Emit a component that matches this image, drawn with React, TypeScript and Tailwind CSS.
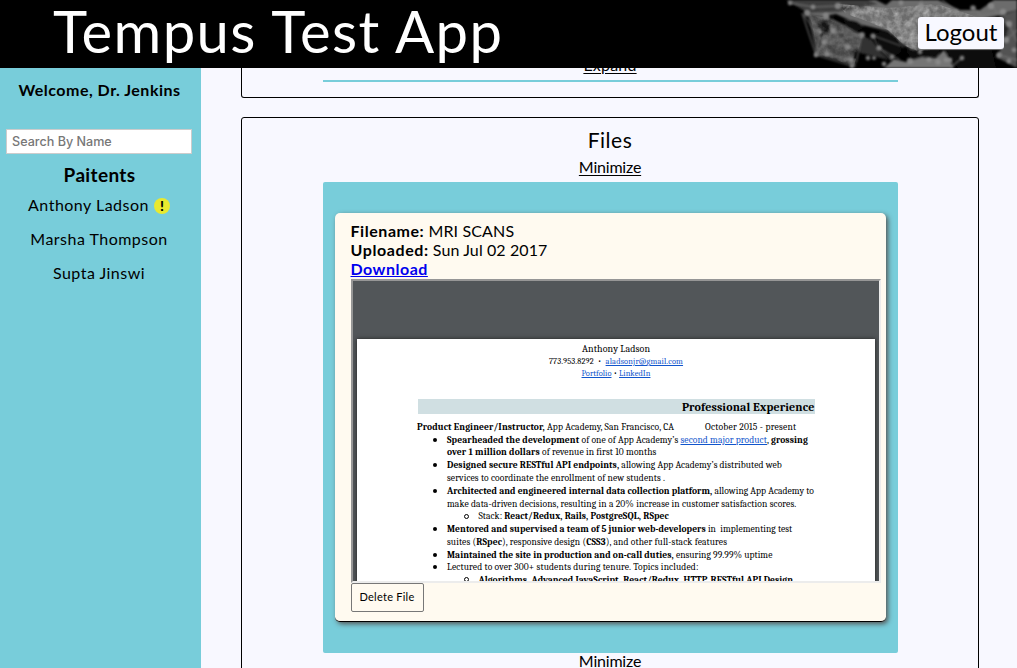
import type { ReactNode } from "react";

function Network() {
  const dots: [number, number, number][] = [
    [10, 3, 3], [27, 13, 4], [33, 7, 3], [46, 16, 4], [58, 6, 4], [40, 32, 3], [53, 31, 3.4], [44, 42, 3.2], [36, 55, 3], [47, 54, 3], [68, 47, 3.4],
    [82, 35, 3.6], [93, 36, 3.4], [99, 48, 3.4], [71, 60, 3], [88, 58, 3], [94, 58, 2.6], [72, 66, 3], [104, 64, 3], [112, 57, 3], [130, 61, 4],
    [140, 52, 3], [149, 60, 3], [158, 62, 3.4], [166, 60, 3], [121, 3, 3], [141, 6, 4], [149, 30, 3], [176, 12, 3], [193, 8, 3.5], [211, 6, 4],
    [223, 12, 4], [229, 24, 4], [226, 40, 4], [219, 55, 3.5], [229, 61, 3], [234, 50, 3], [170, 60, 3], [182, 58, 3],
  ];
  return (
    <svg className="absolute inset-y-0 right-0 h-[68px] w-[237px]" viewBox="0 0 237 68" aria-hidden="true">
      <defs>
        <filter id="grain" x="0" y="0" width="100%" height="100%">
          <feTurbulence type="fractalNoise" baseFrequency="0.14" numOctaves="3" seed="5" />
          <feColorMatrix values="0 0 0 0 0.5  0 0 0 0 0.5  0 0 0 0 0.5  1.6 0 0 0 -0.5" />
          <feComposite in2="SourceGraphic" operator="in" />
        </filter>
        <filter id="soft">
          <feGaussianBlur stdDeviation="1.3" />
        </filter>
        <filter id="slight">
          <feGaussianBlur stdDeviation="0.8" />
        </filter>
      </defs>
      <g filter="url(#soft)">
        <path d="M14 0 28 14 36 18 56 14 78 24 108 31 122 44 136 52 152 48 168 40 180 36 200 20 222 14 237 10V0H214L200 10 180 10 158 0H112L106 5 96 0Z" fill="#6c6c6c" />
        <path d="M6 0 28 13 58 12 98 4 88 0Z" fill="#3c3c3c" />
        <path d="M28 14 36 54 60 61 76 67 73 52 82 37 66 26 48 17Z" fill="#444" />
        <path d="M36 22 54 17 48 32 40 38Z" fill="#191919" />
        <path d="M64 20Q76 18 84 27L77 31 66 27Z" fill="#111" />
        <path d="M96 33Q112 28 120 42L121 52 112 58 99 47Z" fill="#0b0b0b" />
        <path d="M83 36 92 40 100 51 109 60 80 53 76 46Z" fill="#303030" />
        <path d="M104 68 114 59 126 62 142 57 156 58 164 50 170 60 174 68Z" fill="#747474" />
        <path d="M126 50 160 48 158 56 144 56 132 60Z" fill="#101010" />
        <path d="M166 50 212 50 216 68H178L168 58Z" fill="#0c0c0c" />
        <path d="M222 15 237 10V68L216 57 224 44Z" fill="#525252" />
        <path d="M222 14 212 22 216 50 224 44 229 26Z" fill="#262626" />
      </g>
      <path d="M58 4 66 14 84 20 108 30 124 45 138 52 180 38 200 18 157 4 108 8Z" filter="url(#grain)" fill="#fff" />
      <path d="M30 15 38 54 74 66 82 37 66 27 48 18Z" filter="url(#grain)" fill="#fff" opacity=".4" />
      <g stroke="#777" strokeWidth="1.3" opacity=".75" fill="none" filter="url(#slight)">
        <path d="M10 3 33 7 58 6M27 13 40 32 36 55 47 54 71 60M22 13 36 55 53 31 82 35M46 16 53 31 68 47 44 42M46 17 82 35 71 60M36 55 72 66M36 55 44 42 82 35M24 15 41 40M93 36 99 48 112 60M99 48 120 60M82 35 76 63M94 36 124 47M142 0 128 37M146 3 166 20M162 0 184 18 223 12M193 8 204 18M211 6 229 24 237 42M219 55 237 60M226 40 237 30M182 58 170 68M223 12 202 22M229 24 214 18" />
        <path d="M62 4 104 22 142 6M78 15 119 27 149 30 180 20M84 4 123 37 141 29 176 12" opacity=".6" />
      </g>
      <g fill="#8c8c8c" opacity=".85" filter="url(#slight)">
        {dots.map(([x, y, r]) => (
          <circle key={`${x}-${y}`} cx={x} cy={y} r={r * 0.8} />
        ))}
      </g>
    </svg>
  );
}

function Line({ children, h, className = "" }: { children: ReactNode; h: string; className?: string }) {
  return <p className={`flex items-center whitespace-pre ${h} ${className}`}>{children}</p>;
}

function Bullet({ children, h, className = "" }: { children: ReactNode; h: string; className?: string }) {
  return (
    <div className={`flex items-center whitespace-pre pl-[15px] ${h}`}>
      <span className="mr-[10.5px] size-1 shrink-0 rounded-full bg-black" />
      <span className={className}>{children}</span>
    </div>
  );
}

function SubBullet({ children, h, className = "" }: { children: ReactNode; h: string; className?: string }) {
  return (
    <div className={`flex items-center whitespace-pre pl-[46px] ${h}`}>
      <span className="mr-[10px] size-[5px] shrink-0 rounded-full border border-black" />
      <span className={className}>{children}</span>
    </div>
  );
}

function Resume() {
  return (
    <div className="h-[304px] w-[530px] overflow-hidden border-2 border-t-[#969696] border-r-[#ececec] border-b-[#ececec] border-l-[#969696] bg-[#525659] px-1 pt-[58px]">
      <div className="h-[260px] bg-white pt-[3px] font-[Cambria,Caladea,'Liberation_Serif',serif] text-[9.56px] leading-none text-black shadow-[0_0_4px_#222]">
        <div className="flex flex-col items-center whitespace-pre pl-px">
          <Line h="h-[13px]" className="text-[10px] tracking-[0.08px]">Anthony Ladson</Line>
          <Line h="h-[13px]" className="text-[8.4px] tracking-[0.15px]">
            773.953.8292  •  <a className="text-[#1155cc] underline">aladsonjr@gmail.com</a>
          </Line>
          <Line h="h-[11px]" className="text-[8.4px] tracking-[0.05px]">
            <a className="text-[#1155cc] underline">Portfolio</a> • <a className="text-[#1155cc] underline">LinkedIn</a>
          </Line>
        </div>
        <div className="ml-[61px] mt-5 flex h-[15px] w-[397px] items-center justify-end bg-[#d0dfe2] text-[12px] font-bold tracking-[0.13px]">
          Professional Experience
        </div>
        <div className="ml-[61px] mt-[6px]">
          <Line h="h-[13px]" className="-ml-[0.5px] tracking-[0.1px]">
            <b>Product Engineer/Instructor,</b> App Academy, San Francisco, CA<span className="ml-[31px] tracking-[0.22px]">October 2015 - present</span>
          </Line>
          <Bullet h="h-[13px]" className="tracking-[0.09px]">
            <b>Spearheaded the development</b> of one of App Academy’s <a className="text-[#1155cc] underline">second major product</a>, <b>grossing</b>
          </Bullet>
          <Line h="h-[12px]" className="pl-[29.5px] tracking-[0.1px]"><b>over 1 million dollars</b> of revenue in first 10 months</Line>
          <Bullet h="h-[13px]" className="tracking-[0.06px]"><b>Designed secure RESTful API endpoints,</b> allowing App Academy’s distributed web</Bullet>
          <Line h="h-[13px]" className="pl-[29.5px] tracking-[0.11px]">services to coordinate the enrollment of new students .</Line>
          <Bullet h="h-[13px]" className="tracking-[0.04px]"><b>Architected and engineered internal data collection platform,</b> allowing App Academy to</Bullet>
          <Line h="h-[13px]" className="pl-[29.5px] tracking-[0.11px]">make data-driven decisions, resulting in a 20% increase in customer satisfaction scores.</Line>
          <SubBullet h="h-[12px]" className="tracking-[0.04px]">Stack: <b>React/Redux, Rails, PostgreSQL, RSpec</b></SubBullet>
          <Bullet h="h-[13px]" className="tracking-[0.05px]"><b>Mentored and supervised a team of 5 junior web-developers</b> in  implementing test</Bullet>
          <Line h="h-[13px]" className="pl-[29.5px] tracking-[0.11px]">suites (<b>RSpec</b>), responsive design (<b>CSS3</b>), and other full-stack features</Line>
          <Bullet h="h-[13px]" className="tracking-[0.05px]"><b>Maintained the site in production and on-call duties,</b> ensuring 99.99% uptime</Bullet>
          <Bullet h="h-[12px]" className="tracking-[0.14px]">Lectured to over 300+ students during tenure. Topics included:</Bullet>
          <SubBullet h="h-[13px]" className="tracking-[0.04px]"><b>Algorithms, Advanced JavaScript, React/Redux, HTTP, RESTful API Design</b></SubBullet>
        </div>
      </div>
    </div>
  );
}

export default function App() {
  return (
    <div className="flex h-[668px] w-[1017px] flex-col overflow-hidden bg-[#f8f8ff] font-[Lato,sans-serif] text-base text-black">
      <header className="relative flex h-[68px] shrink-0 items-center justify-between bg-black pl-[53px] pr-[13px]">
        <Network />
        <h1 className="-mt-[7px] whitespace-nowrap text-[58px] leading-[64px] tracking-[1.4px] text-white">Tempus Test App</h1>
        <button className="relative mt-[-2px] h-8 w-[86px] rounded-[3px] bg-[#f8f8ff] pb-[2px] text-center text-[24px] leading-[30px] shadow-[0_1px_1px_#777]">Logout</button>
      </header>

      <div className="flex min-h-0 grow">
        <aside className="flex w-[201px] shrink-0 flex-col items-center bg-[#78cdda] pr-[3px] pt-[12px]">
          <h2 className="h-5 whitespace-nowrap pl-px font-bold leading-5 tracking-[0.5px]">Welcome, Dr. Jenkins</h2>
          <input
            className="mt-[29px] h-[25px] w-[186px] border border-[#ccc] bg-white pl-[5px] font-[Inter,sans-serif] text-[12.6px] font-medium placeholder:text-[#777]"
            placeholder="Search By Name"
          />
          <h2 className="mt-[9px] h-6 pl-px text-[19px] font-bold leading-6 tracking-[0.35px]">Paitents</h2>
          <ul className="flex flex-col items-center pt-px tracking-[0.48px]">
            <li className="flex h-[34px] items-center">
              Anthony Ladson
              <span className="ml-[5px] mt-[2px] flex size-4 items-center justify-center rounded-full bg-[#e9e92f] text-[14px] font-black leading-none tracking-normal">!</span>
            </li>
            <li className="flex h-[34px] items-center">Marsha Thompson</li>
            <li className="flex h-[34px] items-center">Supta Jinswi</li>
          </ul>
        </aside>

        <main className="flex grow flex-col overflow-hidden pl-10">
          <section className="flex h-[30px] w-[738px] shrink-0 flex-col items-center rounded-b-[3px] border border-t-0 border-black">
            <div className="-mt-[14px] h-[26px] shrink-0 leading-[22px] tracking-[0.2px] underline underline-offset-2">Expand</div>
            <div className="h-[2px] w-[575px] shrink-0 bg-[#78cdda]" />
          </section>

          <section className="mt-[19px] flex h-[600px] w-[738px] shrink-0 flex-col items-center rounded-[3px] border border-black">
            <h2 className="mt-2 h-[29px] text-[21px] leading-[28px] tracking-[0.5px]">Files</h2>
            <div className="h-[27px] leading-[24px] tracking-[-0.2px] underline underline-offset-2">Minimize</div>
            <div className="h-[471px] w-[575px] shrink-0 rounded-[2px] bg-[#78cdda] px-3 pt-[31px]">
              <article className="h-[409px] w-[551px] rounded-[5px] border-b border-black bg-[#fffaf0] pl-4 pt-2 leading-[19px] shadow-[2px_2px_5px_#555]">
                <p><b className="tracking-[0.55px]">Filename:</b> <span className="tracking-[0.15px]">MRI SCANS</span></p>
                <p><b className="tracking-[0.6px]">Uploaded:</b> <span className="tracking-[0.1px]">Sun Jul 02 2017</span></p>
                <a className="mb-px block font-bold tracking-[0.5px] text-[#0000ee] underline">Download</a>
                <Resume />
                <button className="block h-[29px] w-[73px] rounded-[2px] border border-[#777] pb-0.5 text-center text-[11px] leading-none tracking-[0.25px]">Delete File</button>
              </article>
            </div>
            <div className="-mt-px leading-[17px] tracking-[-0.2px] underline underline-offset-2">Minimize</div>
          </section>
        </main>
      </div>
    </div>
  );
}
